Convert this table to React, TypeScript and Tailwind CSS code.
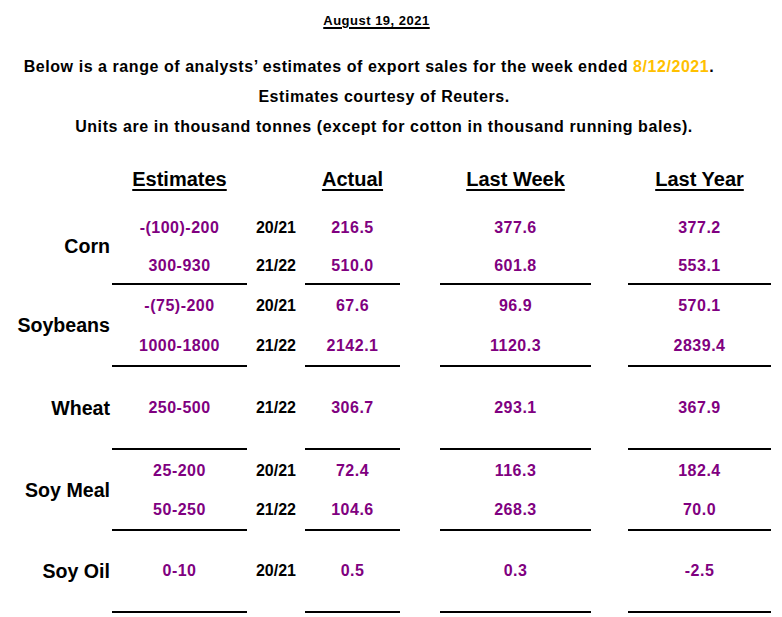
import React from 'react';

interface Block {
  name: string;
  rows: { est: string; year: string; actual: string; lastWeek: string; lastYear: string }[];
  heights: string[]; // row height classes
  namePad?: string;
}

const blocks: Block[] = [
  {
    name: 'Corn',
    heights: ['h-[43px]', 'h-[34px]'],
    namePad: 'pt-[3px]',
    rows: [
      { est: '-(100)-200', year: '20/21', actual: '216.5', lastWeek: '377.6', lastYear: '377.2' },
      { est: '300-930', year: '21/22', actual: '510.0', lastWeek: '601.8', lastYear: '553.1' },
    ],
  },
  {
    name: 'Soybeans',
    heights: ['h-[41px]', 'h-[39px]'],
    rows: [
      { est: '-(75)-200', year: '20/21', actual: '67.6', lastWeek: '96.9', lastYear: '570.1' },
      { est: '1000-1800', year: '21/22', actual: '2142.1', lastWeek: '1120.3', lastYear: '2839.4' },
    ],
  },
  {
    name: 'Wheat',
    heights: ['h-[81px]'],
    rows: [{ est: '250-500', year: '21/22', actual: '306.7', lastWeek: '293.1', lastYear: '367.9' }],
  },
  {
    name: 'Soy Meal',
    heights: ['h-[41px]', 'h-[38px]'],
    rows: [
      { est: '25-200', year: '20/21', actual: '72.4', lastWeek: '116.3', lastYear: '182.4' },
      { est: '50-250', year: '21/22', actual: '104.6', lastWeek: '268.3', lastYear: '70.0' },
    ],
  },
  {
    name: 'Soy Oil',
    heights: ['h-[80px]'],
    rows: [{ est: '0-10', year: '20/21', actual: '0.5', lastWeek: '0.3', lastYear: '-2.5' }],
  },
];

type Field = 'est' | 'year' | 'actual' | 'lastWeek' | 'lastYear';

// one column of a commodity block: stacked sub-rows, optional rule underneath
const Column = ({ block, field, width, ruled }: { block: Block; field: Field; width: string; ruled: boolean }) => (
  <div className={`${width} flex flex-col ${ruled ? 'border-b-2 border-black' : ''}`}>
    {block.rows.map((row, i) => (
      <div
        key={i}
        className={`${block.heights[i]} flex items-center justify-center text-[16px] font-bold leading-none ${
          field === 'year' ? 'text-black' : 'text-[#800080] tracking-[0.5px]'
        }`}
      >
        {row[field]}
      </div>
    ))}
  </div>
);

const HeaderCell = ({ label, width }: { label: string; width: string }) => (
  <div className={`${width} flex justify-center pt-[9px]`}>
    <span className="text-[20px] font-bold leading-[20px] underline decoration-2 underline-offset-[3px]">{label}</span>
  </div>
);

export default function App() {
  return (
    <div className="w-[782px] h-[617px] overflow-hidden bg-white text-black font-['Liberation_Sans',Arial,sans-serif]">
      {/* intro text */}
      <div className="w-[768px] pt-[13px] text-center font-bold">
        <div className="pr-[15px] text-[13px] leading-[16px] tracking-[0.5px]">
          <span className="underline decoration-2 underline-offset-[2px]">August 19, 2021</span>
        </div>
        <div className="mt-[23px] pr-[30px] text-[16px] leading-[30px] tracking-[0.56px]">
          Below is a range of analysts’ estimates of export sales for the week ended{' '}
          <span className="text-[#FFC000]">8/12/2021</span>.
        </div>
        <div className="text-[16px] leading-[30px] tracking-[0.55px]">Estimates courtesy of Reuters.</div>
        <div className="text-[16px] leading-[30px] tracking-[0.58px]">
          Units are in thousand tonnes (except for cotton in thousand running bales).
        </div>
      </div>

      {/* table */}
      <div className="mt-[18px]">
        <div className="flex h-[46px]">
          <div className="w-[112px]" />
          <HeaderCell label="Estimates" width="w-[135px]" />
          <div className="w-[58px]" />
          <HeaderCell label="Actual" width="w-[95px]" />
          <div className="w-[40px]" />
          <HeaderCell label="Last Week" width="w-[151px]" />
          <div className="w-[37px]" />
          <HeaderCell label="Last Year" width="w-[143px]" />
        </div>

        {blocks.map((block) => (
          <div key={block.name} className="flex">
            <div
              className={`w-[112px] pr-[2px] flex items-center justify-end text-[19.6px] font-bold leading-none ${
                block.namePad ?? ''
              }`}
            >
              {block.name}
            </div>
            <Column block={block} field="est" width="w-[135px]" ruled />
            <Column block={block} field="year" width="w-[58px]" ruled={false} />
            <Column block={block} field="actual" width="w-[95px]" ruled />
            <div className="w-[40px]" />
            <Column block={block} field="lastWeek" width="w-[151px]" ruled />
            <div className="w-[37px]" />
            <Column block={block} field="lastYear" width="w-[143px]" ruled />
          </div>
        ))}
      </div>
    </div>
  );
}
